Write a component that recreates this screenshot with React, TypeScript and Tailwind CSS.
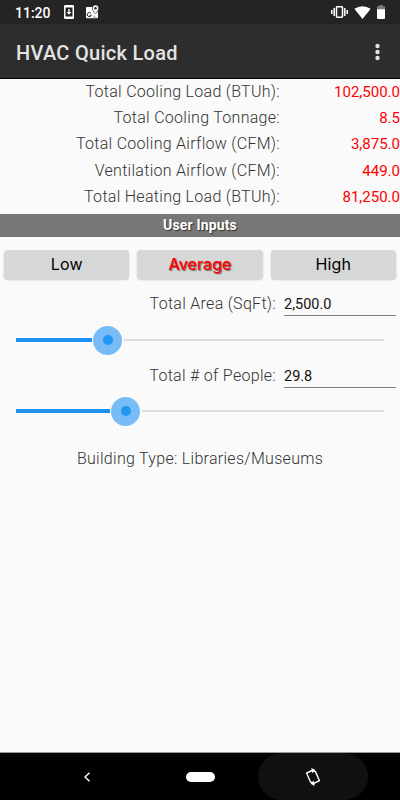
import clsx from "clsx";

const results = [
  { label: "Total Cooling Load (BTUh):", value: "102,500.0" },
  { label: "Total Cooling Tonnage:", value: "8.5" },
  { label: "Total Cooling Airflow (CFM):", value: "3,875.0" },
  { label: "Ventilation Airflow (CFM):", value: "449.0" },
  { label: "Total Heating Load (BTUh):", value: "81,250.0" },
];

const levels = ["Low", "Average", "High"];

const StatusBar = () => {
  return (
    <div className="h-6 shrink-0 bg-[#242424] flex items-center pl-[15px] pr-[15px] text-white">
      <span className="pt-px text-[14px] leading-6 font-medium w-[49px]">
        11:20
      </span>
      <svg className="h-[14px] w-[10px]" viewBox="0 0 10 14">
        <rect width="10" height="14" rx="1.3" fill="#fff" />
        <rect x="1.5" y="2.5" width="7" height="9" fill="#242424" />
        <path d="M4.3 4h1.4v3h1.8L5 9.7 2.5 7h1.8z" fill="#fff" />
      </svg>
      <svg className="ml-[12px] h-[14px] w-[13px]" viewBox="0 0 13 14">
        <path
          d="M1.3 2H6c0 2 1 4 3.2 6L11 6.5h1V12c0 .8-.5 1.3-1.3 1.3H1.3C.5 13.3 0 12.8 0 12V3.3C0 2.5.5 2 1.3 2z"
          fill="#fff"
        />
        <path
          d="M5 8.3A2.1 2.1 0 1 0 5.3 10.3H3.5"
          fill="none"
          stroke="#242424"
          strokeWidth="1"
        />
        <path d="M5.5 13.3l3-3 3 3z" fill="#242424" opacity=".25" />
        <path
          d="M9.5 0a3.2 3.2 0 0 1 3.2 3.2C12.7 5.5 9.5 9 9.5 9S6.3 5.5 6.3 3.2A3.2 3.2 0 0 1 9.5 0z"
          fill="#fff"
          stroke="#242424"
          strokeWidth=".6"
        />
        <circle cx="9.5" cy="3.3" r="1.2" fill="#242424" />
      </svg>
      <svg className="ml-auto h-[12px] w-[17px]" viewBox="0 0 17 12">
        <rect x="5.5" y=".8" width="6" height="10.4" rx=".6" fill="none" stroke="#fff" strokeWidth="1.5" />
        <path d="M3.2 2v8M13.8 2v8" stroke="#fff" strokeWidth="1.5" />
        <path d="M.8 4v4M16.2 4v4" stroke="#fff" strokeWidth="1.5" />
      </svg>
      <svg className="ml-[6px] h-[13px] w-[17px]" viewBox="0 0 17 13">
        <path d="M.3 2.8Q8.5-2.5 16.7 2.8L8.5 13z" fill="#fff" />
      </svg>
      <svg className="ml-[6px] h-[14px] w-[8px]" viewBox="0 0 8 14">
        <path d="M2.3 0h3.4v1.3H8V5H0V1.3h2.3z" fill="#777" />
        <path d="M0 4.3h8V13a1 1 0 0 1-1 1H1a1 1 0 0 1-1-1z" fill="#fff" />
      </svg>
    </div>
  );
};

const InputRow = ({ label, value }: { label: string; value: string }) => {
  return (
    <div className="flex h-[29px] items-start pr-1">
      <label className="w-[276px] pt-px text-right text-[16px] leading-6 font-light tracking-[0.29px]">
        {label}
      </label>
      <input
        className="ml-2 h-[25px] w-[112px] border-b border-[#7b7b7b] pt-[3px] text-[14.5px] text-[#111] outline-none"
        defaultValue={value}
      />
    </div>
  );
};

const Slider = ({ position }: { position: number }) => {
  return (
    <div className="mx-4 flex h-[30px] items-center">
      <div className="h-[4px] bg-[#1e90f0]" style={{ width: position - 16 }} />
      <div className="ml-px mr-[2px] flex h-[29px] w-[29px] shrink-0 items-center justify-center rounded-full bg-[#78bcf7]">
        <div className="h-[10px] w-[10px] rounded-full bg-[#2196f3]" />
      </div>
      <div className="h-[2px] grow bg-[#dedede]" />
    </div>
  );
};

export default function App() {
  return (
    <div className="h-[800px] w-[400px] flex flex-col overflow-hidden bg-[#fafafa] font-['Roboto',sans-serif] text-[#333]">
      <StatusBar />
      <nav className="h-[55px] shrink-0 border-b border-black bg-[#2d2d2d] flex items-center justify-between pl-4 pr-[20px] text-[#e4e4e4]">
        <h1 className="pt-[3px] text-[20px] font-medium tracking-[0.28px]">
          HVAC Quick Load
        </h1>
        <svg className="mt-px h-[18px] w-[5px]" viewBox="0 0 5 18" fill="currentColor">
          <circle cx="2.5" cy="3" r="2.2" />
          <circle cx="2.5" cy="9" r="2.2" />
          <circle cx="2.5" cy="15" r="2.2" />
        </svg>
      </nav>
      <main className="flex grow flex-col">
        <section className="h-[134px]">
          {results.map((row) => (
            <div key={row.label} className="flex h-[26.3px] items-center">
              <p className="w-[280px] pb-px text-right text-[16px] leading-6 font-light tracking-[0.29px]">
                {row.label}
              </p>
              <p className="grow pb-px text-right text-[15px] leading-6 text-[#f00]">
                {row.value}
              </p>
            </div>
          ))}
        </section>
        <h2 className="mt-px h-[23px] bg-[#777] text-center text-[14px] leading-[23px] font-bold tracking-[0.15px] text-white [text-shadow:1px_1px_1px_#333]">
          User Inputs
        </h2>
        <div className="mt-[13px] flex gap-2 px-1">
          {levels.map((level) => (
            <button
              key={level}
              className={clsx(
                "h-[29px] flex-1 rounded-[4px] bg-[#d6d8d7] font-['Inter',sans-serif] text-[16px] leading-[29px] shadow-[0_1px_2px_rgba(0,0,0,0.2)]",
                level === "Average"
                  ? "font-medium text-[#f00] [text-shadow:1px_1px_1px_#666]"
                  : "tracking-[0.2px] text-black"
              )}
            >
              {level}
            </button>
          ))}
        </div>
        <div className="mt-[12px]">
          <InputRow label="Total Area (SqFt):" value="2,500.0" />
          <div className="mt-[5px]">
            <Slider position={92} />
          </div>
        </div>
        <div className="mt-[8px]">
          <InputRow label="Total # of People:" value="29.8" />
          <div className="mt-[4px]">
            <Slider position={110} />
          </div>
        </div>
        <p className="mt-[21px] text-center text-[16px] leading-6 font-light tracking-[0.29px]">
          Building Type: Libraries/Museums
        </p>
      </main>
      <footer className="h-[48px] shrink-0 border-t border-[#999] bg-black flex items-center">
        <svg className="ml-[84px] h-[10px] w-[6px]" viewBox="0 0 6 10">
          <path d="M5.5.7L1 5l4.5 4.3" fill="none" stroke="#fff" strokeWidth="1.4" />
        </svg>
        <div className="ml-[96px] h-[10px] w-[29px] rounded-full bg-white" />
        <div className="ml-[43px] flex h-[47px] w-[110px] items-center justify-center rounded-full bg-[#101010]">
          <svg className="h-[18px] w-[16px]" viewBox="0 0 16 18">
            <path
              d="M7 2.5L1.6 5.2l4 9 2.4.7M9 15.3l5.4-2.7-3.9-8.9L8 3"
              fill="none"
              stroke="#fff"
              strokeWidth="1.4"
            />
            <path d="M6.3 0l4 2-3.1 3.2zM9.7 18l-4.1-2.2 3.1-3.2z" fill="#fff" />
          </svg>
        </div>
      </footer>
    </div>
  );
}
